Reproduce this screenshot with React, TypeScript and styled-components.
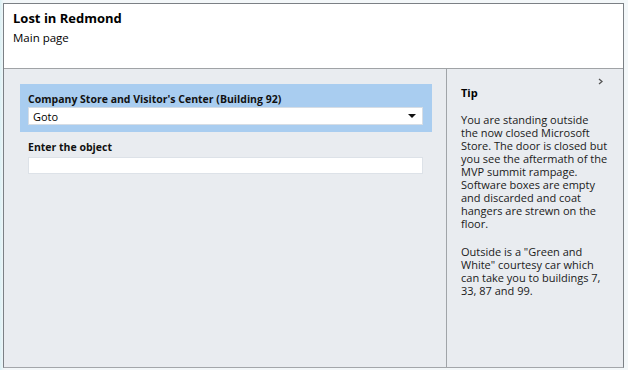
import styled, { createGlobalStyle } from "styled-components";

const GlobalStyle = createGlobalStyle`
  html, body {
    margin: 0;
    padding: 0;
    background: linear-gradient(90deg, #dcf1f5 0, #f3f7f9 4px);
    font-family: "Open Sans", "Liberation Sans", sans-serif;
    color: #000;
  }
`

const Frame = styled.div`
  box-sizing: border-box;
  width: 621px;
  height: 365px;
  margin: 3px 0 0 3px;
  border: 1px solid #7b8085;
  border-bottom-color: #a3a6aa;
  display: flex;
  flex-direction: column;
`

const Header = styled.div`
  height: 65px;
  background: #fff;
  border-bottom: 1px solid #a0a3a6;
  padding: 5px 0 0 9px;
  box-sizing: border-box;
`

const Title = styled.div`
  font-size: 13px;
  font-weight: bold;
  line-height: 19px;
`

const SubTitle = styled.div`
  font-size: 11.5px;
  line-height: 16px;
  margin-top: 2px;
`

const Body = styled.div`
  flex: 1;
  display: grid;
  grid-template-columns: 442px 1fr;
  background: #e9ecf0;
`

const Main = styled.div`
  padding: 15px 14px 0 16px;
`

const Selector = styled.div`
  background: #a9cdf0;
  padding: 8px 9px 7px 8px;
`

const Label = styled.div`
  font-size: 10.5px;
  font-weight: bold;
  line-height: 15px;
  color: #111;
`

const Dropdown = styled.div`
  box-sizing: border-box;
  height: 18px;
  background: #fff;
  border: 1px solid #d6dde5;
  display: flex;
  align-items: center;
  justify-content: space-between;
  padding: 0 6px 0 4px;
  font-size: 11px;
`

const Arrow = styled.span`
  width: 0;
  height: 0;
  border-left: 4px solid transparent;
  border-right: 4px solid transparent;
  border-top: 4px solid #111;
`

const Field = styled.div`
  padding: 8px 9px 0 8px;
`

const Input = styled.div`
  box-sizing: border-box;
  height: 17px;
  margin-top: 2px;
  background: #fff;
  border: 1px solid #dde2e8;
`

const Tip = styled.div`
  position: relative;
  border-left: 1px solid #a0a4a8;
  padding: 16px 8px 0 14px;
`

const Chevron = styled.svg`
  position: absolute;
  top: 9px;
  right: 20px;
`

const TipTitle = styled.div`
  font-size: 11px;
  font-weight: bold;
  line-height: 16px;
`

const TipText = styled.p<{ $first?: boolean }>`
  font-size: 11px;
  line-height: 13px;
  margin: ${p => (p.$first ? "12px" : "15px")} 0 0 0;
  color: #1a1a1a;
`

const lines = (items: string[]) =>
  items.map((l, i) => (
    <span key={i}>
      {l}
      {i < items.length - 1 && <br />}
    </span>
  ))

export default function App() {
  return (
    <>
      <GlobalStyle />
      <Frame>
        <Header>
          <Title>Lost in Redmond</Title>
          <SubTitle>Main page</SubTitle>
        </Header>
        <Body>
          <Main>
            <Selector>
              <Label>Company Store and Visitor's Center (Building 92)</Label>
              <Dropdown>
                <span>Goto</span>
                <Arrow />
              </Dropdown>
            </Selector>
            <Field>
              <Label>Enter the object</Label>
              <Input />
            </Field>
          </Main>
          <Tip>
            <Chevron width="5" height="7" viewBox="0 0 5 7">
              <path d="M1 1 L4 3.5 L1 6" fill="none" stroke="#555" strokeWidth="1.3" />
            </Chevron>
            <TipTitle>Tip</TipTitle>
            <TipText $first>
              {lines([
                "You are standing outside",
                "the now closed Microsoft",
                "Store. The door is closed but",
                "you see the aftermath of the",
                "MVP summit rampage.",
                "Software boxes are empty",
                "and discarded and coat",
                "hangers are strewn on the",
                "floor.",
              ])}
            </TipText>
            <TipText>
              {lines([
                "Outside is a \"Green and",
                "White\" courtesy car which",
                "can take you to buildings 7,",
                "33, 87 and 99.",
              ])}
            </TipText>
          </Tip>
        </Body>
      </Frame>
    </>
  )
}
